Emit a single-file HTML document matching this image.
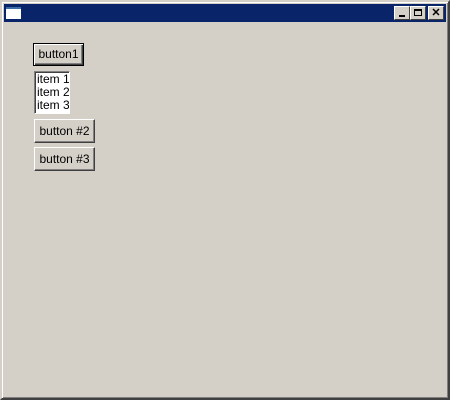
<!DOCTYPE html>
<html><head><style>
body{margin:0;width:450px;height:400px;background:#d4d0c8;position:relative;overflow:hidden;font-family:"Liberation Sans",sans-serif;font-size:12px}
.win{position:absolute;left:0;top:0;width:446px;height:396px;border:2px solid;border-color:#d4d0c8 #404040 #404040 #d4d0c8;box-shadow:inset 1px 1px #fff,inset -1px -1px #808080}
.title{position:absolute;left:4px;top:4px;width:442px;height:18px;background:#0a246a}
.icon{position:absolute;left:2px;top:3px;width:15px;height:12px;background:#fff;border-top:2px solid #3a6ea5;box-sizing:border-box}
.tb{position:absolute;top:2px;width:16px;height:14px;background:#d4d0c8;box-sizing:border-box;border:1px solid;border-color:#fff #404040 #404040 #fff;font-size:10px;font-weight:bold;text-align:center;line-height:12px}
.btn{position:absolute;background:#d4d0c8;box-sizing:border-box;border:1px solid;border-color:#fff #404040 #404040 #fff;box-shadow:inset -1px -1px #808080;text-align:center;color:#000}
.lb{position:absolute;left:34px;top:71px;width:36px;height:43px;background:#fff;box-sizing:border-box;border:1px solid;border-color:#808080 #fff #fff #808080;box-shadow:inset 1px 1px #404040;padding:1px 0 0 2px;line-height:13px;font-size:12px;overflow:hidden;white-space:nowrap}
</style></head><body>
<div class="win"></div>
<div class="title"><div class="icon"></div>
<div class="tb" style="left:390px"><div style="position:absolute;left:4px;top:8px;width:6px;height:2px;background:#000"></div></div>
<div class="tb" style="left:406px"><div style="position:absolute;left:3px;top:2px;width:8px;height:7px;border:1px solid #000;border-top-width:2px;box-sizing:border-box"></div></div>
<div class="tb" style="left:424px;font-size:11px">✕</div>
</div>
<div class="btn" style="left:33px;top:43px;width:51px;height:23px;border:1px solid #000;box-shadow:inset 1px 1px #fff,inset -1px -1px #404040,inset -2px -2px #808080;line-height:21px">button1</div>
<div class="lb">item 1<br>item 2<br>item 3</div>
<div class="btn" style="left:34px;top:119px;width:61px;height:24px;line-height:22px">button #2</div>
<div class="btn" style="left:34px;top:147px;width:61px;height:24px;line-height:22px">button #3</div>
</body></html>
